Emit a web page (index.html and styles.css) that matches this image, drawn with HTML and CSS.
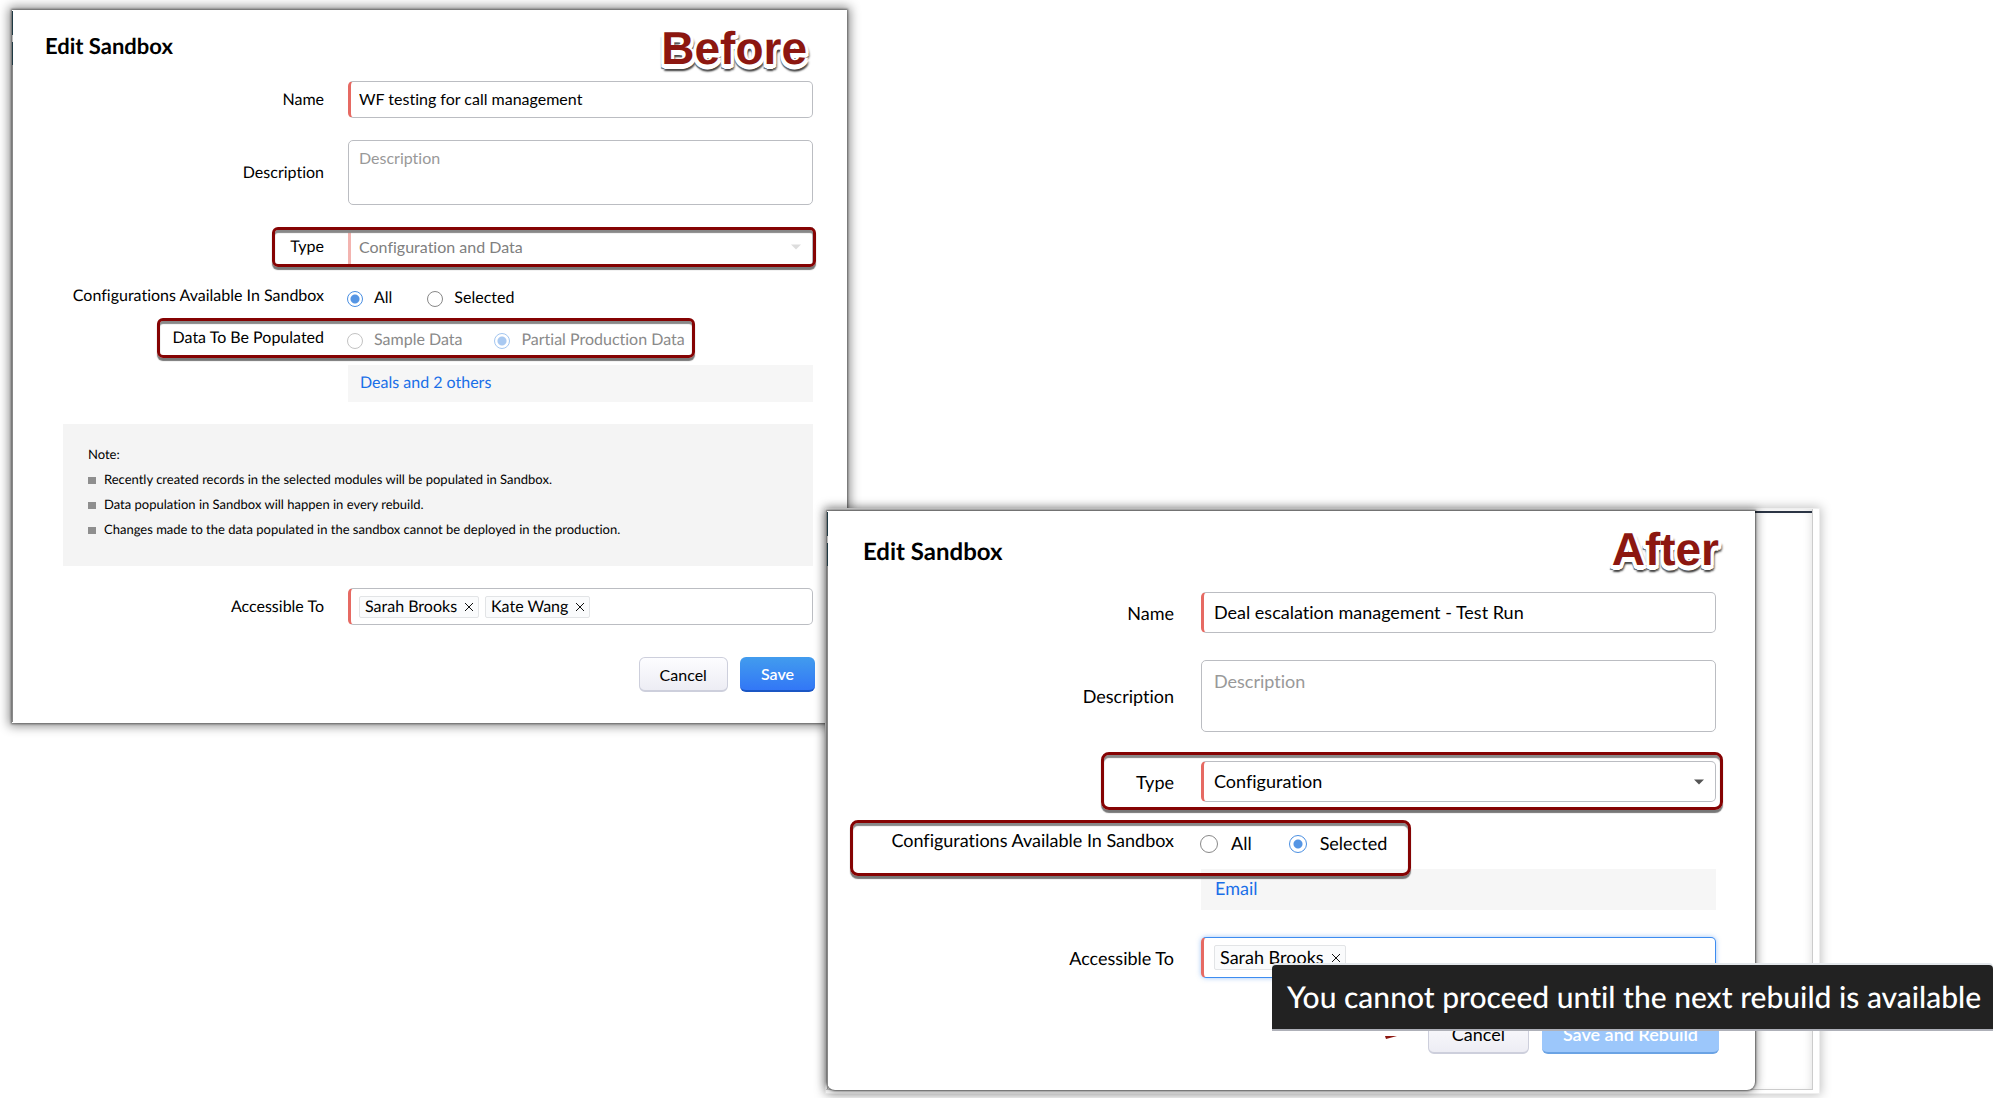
FILE: index.html
```
<!DOCTYPE html>
<html lang="en">
<head>
  <meta charset="UTF-8">
  <meta name="viewport" content="width=device-width, initial-scale=1.0">
  <title>Edit Sandbox - Before and After</title>
  <link rel="stylesheet" href="styles.css">
</head>
<body>
  <main class="canvas">

    <!-- Before -->
    <form class="window before">
      <h2 class="title">Edit Sandbox</h2>
      <span class="stamp">Before</span>

      <div class="row">
        <label class="label" for="bName">Name</label>
        <input class="field required" type="text" id="bName" value="WF testing for call management">
      </div>

      <div class="row">
        <label class="label" for="bDesc">Description</label>
        <textarea class="field" id="bDesc" placeholder="Description"></textarea>
      </div>

      <div class="row type-row">
        <label class="label" for="bType">Type</label>
        <div class="select-wrap">
          <select class="field required" id="bType" disabled>
            <option>Configuration and Data</option>
          </select>
          <svg class="caret" viewBox="0 0 10 6" width="10" height="6"><path d="M0 0.500h10L5 5.500z"/></svg>
        </div>
        <span class="mark"></span>
      </div>

      <div class="row radio-row" role="radiogroup" aria-labelledby="bConfig">
        <span class="label" id="bConfig">Configurations Available In Sandbox</span>
        <div class="radios">
          <label><input type="radio" name="bConfig" checked>All</label>
          <label><input type="radio" name="bConfig">Selected</label>
        </div>
      </div>

      <div class="row radio-row data-row" role="radiogroup" aria-labelledby="bData">
        <span class="label" id="bData">Data To Be Populated</span>
        <div class="radios disabled">
          <label><input type="radio" name="bData" disabled>Sample Data</label>
          <label><input type="radio" name="bData" checked disabled>Partial Production Data</label>
        </div>
        <span class="mark"></span>
      </div>

      <div class="row link-row">
        <div class="link-box"><a href="#">Deals and 2 others</a></div>
      </div>

      <div class="note">
        <p>Note:</p>
        <ul>
          <li>Recently created records in the selected modules will be populated in Sandbox.</li>
          <li>Data population in Sandbox will happen in every rebuild.</li>
          <li>Changes made to the data populated in the sandbox cannot be deployed in the production.</li>
        </ul>
      </div>

      <div class="row">
        <label class="label" for="bAccess">Accessible To</label>
        <div class="field required tags">
          <span class="tag">Sarah Brooks
            <button type="button" aria-label="Remove Sarah Brooks"><svg viewBox="0 0 10 10" width="10" height="10"><path d="M1 1l8 8M9 1l-8 8"/></svg></button>
          </span>
          <span class="tag">Kate Wang
            <button type="button" aria-label="Remove Kate Wang"><svg viewBox="0 0 10 10" width="10" height="10"><path d="M1 1l8 8M9 1l-8 8"/></svg></button>
          </span>
          <input type="text" id="bAccess">
        </div>
      </div>

      <div class="actions">
        <button type="button" class="btn">Cancel</button>
        <button type="button" class="btn primary">Save</button>
      </div>
    </form>

    <!-- After -->
    <div class="frame">
      <form class="window after">
        <h2 class="title">Edit Sandbox</h2>
        <span class="stamp">After</span>

        <div class="row">
          <label class="label" for="aName">Name</label>
          <input class="field required" type="text" id="aName" value="Deal escalation management - Test Run">
        </div>

        <div class="row">
          <label class="label" for="aDesc">Description</label>
          <textarea class="field" id="aDesc" placeholder="Description"></textarea>
        </div>

        <div class="row type-row">
          <label class="label" for="aType">Type</label>
          <div class="select-wrap">
            <select class="field required" id="aType">
              <option>Configuration</option>
            </select>
            <svg class="caret" viewBox="0 0 10 6" width="10" height="6"><path d="M0 0.500h10L5 5.500z"/></svg>
          </div>
          <span class="mark"></span>
        </div>

        <div class="row radio-row config-row" role="radiogroup" aria-labelledby="aConfig">
          <span class="label" id="aConfig">Configurations Available In Sandbox</span>
          <div class="radios">
            <label><input type="radio" name="aConfig">All</label>
            <label><input type="radio" name="aConfig" checked>Selected</label>
          </div>
          <span class="mark"></span>
        </div>

        <div class="row link-row">
          <div class="link-box"><a href="#">Email</a></div>
        </div>

        <div class="row">
          <label class="label" for="aAccess">Accessible To</label>
          <div class="field required tags focused">
            <span class="tag">Sarah Brooks
              <button type="button" aria-label="Remove Sarah Brooks"><svg viewBox="0 0 10 10" width="10" height="10"><path d="M1 1l8 8M9 1l-8 8"/></svg></button>
            </span>
            <input type="text" id="aAccess">
          </div>
        </div>

        <div class="actions">
          <svg class="arrow-tip" viewBox="0 0 16 8" width="16" height="8"><path d="M1 8L0 5h12z"/></svg>
          <button type="button" class="btn">Cancel</button>
          <button type="button" class="btn primary" disabled>Save and Rebuild</button>
        </div>
      </form>
    </div>

    <div class="tooltip" role="tooltip">You cannot proceed until the next rebuild is available</div>
  </main>
</body>
</html>
```

FILE: styles.css
```
* {
  box-sizing: border-box;
}
body {
  margin: 0;
  background: #fff;
  color: #000;
  font-family: Lato, "Liberation Sans", sans-serif;
  font-variant-ligatures: none;
  text-rendering: geometricPrecision;
}
.canvas {
  position: relative;
  min-height: 100vh;
  overflow: hidden;
}

/* windows */
.window {
  background: #fff;
  font-size: 16px;
}
.window::before {
  content: "";
  position: absolute;
  top: 1px;
  bottom: 1px;
  left: 0;
  width: 1px;
  background: linear-gradient(#1f3a44 24px, #bbb 24px, #bbb 31px, #1f3a44 31px, #1f3a44 54px, #888 54px);
}
.before {
  position: absolute;
  top: 10px;
  left: 0.6%;
  width: 41.75%;
  padding: 21px 34px 31px 33px;
  box-shadow: 0 0 2px 1px rgba(0, 0, 0, 0.45), 0 0 10px 3px rgba(0, 0, 0, 0.45);
}
.frame {
  position: absolute;
  top: 508px;
  left: 41.25%;
  width: 49.75%;
  padding: 2px 64px 3px 1px;
  background: #fff;
  border: 1px solid #eee;
  box-shadow: inset -7px -4px 0 -1px #fff, inset -8px -5px 0 -1px #ccc, inset -8px 0 8px rgba(0, 0, 0, 0.12), 0 0 10px 1px rgba(0, 0, 0, 0.25);
}
.frame::before {
  content: "";
  position: absolute;
  top: 2px;
  right: 7px;
  width: 57px;
  height: 2px;
  background: #2b3444;
}
.after {
  position: relative;
  padding: 26px 39px 36px 36px;
  font-size: 18px;
  border-radius: 0 0 8px 8px;
  box-shadow: 0 0 2px 1px rgba(0, 0, 0, 0.5), 0 0 10px 2px rgba(0, 0, 0, 0.4);
}
.title {
  margin: 0 0 20px;
  font-size: 22px;
  line-height: 30px;
}
.after .title {
  margin-bottom: 25px;
  font-size: 24px;
}
.stamp {
  position: absolute;
  top: 12px;
  right: 40px;
  font: bold 46px/52px "Liberation Sans", Arial, sans-serif;
  color: #8c1710;
  text-shadow: -3px 0 #fff, 3px 0 #fff, 0 3px #fff, 3px 3px #fff, -3px 3px #fff, 2px 4px #fff, -2px 4px #fff, 0 5px #fff, -3px 5px 1px #666, 0 7px 2px #444, 3px 6px 2px #555, 4px 4px 2px #888;
}
.after .stamp {
  top: 12px;
  right: 36px;
}

/* form rows */
.row {
  position: relative;
  display: grid;
  grid-template-columns: 279px 1fr;
  column-gap: 24px;
  align-items: center;
  margin-bottom: 22px;
}
.after .row {
  grid-template-columns: 311px 1fr;
  column-gap: 27px;
  margin-bottom: 27px;
}
.label {
  text-align: right;
  line-height: 20px;
}
.field {
  display: block;
  width: 100%;
  height: 37px;
  margin: 0;
  padding: 0 10px 2px;
  border: 1px solid #bbbdc2;
  border-radius: 5px;
  background: #fff;
  color: #000;
  font: inherit;
  outline: none;
}
.after .field {
  height: 41px;
  padding: 0 12px 2px;
}
textarea.field {
  height: 65px;
  padding-top: 7px;
  line-height: 20px;
  resize: none;
}
.after textarea.field {
  height: 72px;
  padding-top: 10px;
}
.field::placeholder {
  color: #999;
}
.field.required {
  border-left: 3px solid #e66a63;
  padding-left: 8px;
}
.after .field.required {
  padding-left: 10px;
}
select.field {
  appearance: none;
}
.select-wrap {
  position: relative;
}
.caret {
  position: absolute;
  top: 50%;
  right: 12px;
  margin-top: -3px;
  fill: #555;
}
.before .caret {
  fill: #ddd;
}
.before select.field {
  height: 40px;
  border-radius: 0;
  border-left-color: #f3b4b0;
  color: #808080;
  opacity: 1;
}
.after .type-row {
  margin: -7px 0 10px;
  padding: 9px 0 8px;
}

/* red annotation boxes */
.mark {
  position: absolute;
  top: 0;
  bottom: 0;
  left: 227px;
  right: -3px;
  border: 3px solid #850303;
  border-radius: 6px;
  box-shadow: 0 3px 1px #777, inset 0 3px 1px #888;
  pointer-events: none;
}
.data-row .mark {
  left: 112px;
  right: 118px;
}
.after .mark {
  left: 238px;
  right: -7px;
  border-radius: 8px;
}
.after .config-row .mark {
  left: -13px;
  right: 305px;
  bottom: -7px;
}

/* radios */
.type-row {
  margin-bottom: 19px;
}
.radio-row {
  align-items: start;
  margin-bottom: 10px;
}
.radios {
  display: flex;
  gap: 36px;
  padding-top: 2px;
  line-height: 20px;
}
.radios label {
  display: flex;
  align-items: center;
  gap: 11px;
}
.radios input {
  appearance: none;
  width: 16px;
  height: 16px;
  margin: 1px 0 0 -1px;
  border: 1px solid #888;
  border-radius: 50%;
  background: #fff;
}
.radios input:checked {
  border-color: #4a8fe2;
  background: radial-gradient(circle, #5595e4 4px, #fff 5px);
}
.radios.disabled {
  gap: 33px;
  color: #8a8a8a;
}
.radios.disabled input {
  opacity: 0.5;
}
.data-row {
  height: 40px;
  padding-top: 10px;
  margin-bottom: 7px;
}
.after .config-row {
  height: 49px;
  margin-bottom: 0;
  padding-top: 10px;
  z-index: 1;
}
.after .radios {
  gap: 38px;
  padding-top: 3px;
}
.after .radios label {
  gap: 13px;
}
.after .radios input {
  width: 18px;
  height: 18px;
}
.link-box {
  grid-column: 2;
  padding: 0 12px 2px;
  background: #f6f6f6;
  line-height: 35px;
}
.after .link-box {
  padding: 0 14px 2px;
  line-height: 39px;
}
.link-box a {
  color: #1a6fe8;
  text-decoration: none;
}

.note {
  margin: 0 0 22px 18px;
  padding: 19px 25px 24px;
  background: #f4f4f4;
  font-size: 13px;
}
.note p {
  margin: 0 0 2px;
  line-height: 22px;
}
.note ul {
  margin: 0;
  padding: 0;
  list-style: none;
}
.note li {
  display: flex;
  align-items: center;
  gap: 8px;
  line-height: 25px;
}
.note li::before {
  content: "";
  width: 8px;
  height: 7px;
  margin-top: 2px;
  background: #8e8e8e;
}

/* tags */
.field.tags {
  display: flex;
  align-items: center;
  gap: 6px;
  padding-bottom: 0;
}
.tags > input {
  flex: 1;
  min-width: 0;
  border: 0;
  background: none;
  font: inherit;
  outline: none;
}
.tag {
  display: flex;
  align-items: center;
  gap: 7px;
  padding: 0 4px 0 5px;
  border: 1px solid #e2e4e6;
  border-radius: 2px;
  background: #fafbfc;
  line-height: 20px;
}
.after .tag {
  line-height: 23px;
}
.tag button {
  display: flex;
  padding: 0;
  border: 0;
  background: none;
}
.tag svg {
  fill: none;
  stroke: #111;
}
.after .tags.focused {
  border-color: #3d8cf0;
  border-left-color: #e66a63;
  box-shadow: 0 0 5px rgba(61, 140, 240, 0.5);
}

/* buttons */
.actions {
  position: relative;
  display: flex;
  justify-content: flex-end;
  gap: 12px;
  margin: 32px -2px 0 0;
}
.after .actions {
  gap: 13px;
  margin: 37px -3px 0 0;
}
.btn {
  height: 35px;
  padding: 0 20px;
  border: 1px solid #cdcfdc;
  border-bottom-width: 2px;
  border-radius: 6px;
  background: linear-gradient(#fdfdff, #ededf4);
  color: #000;
  font: inherit;
}
.btn.primary {
  padding: 0 21px;
  border: 0;
  border-bottom: 2px solid #1a56c4;
  background: linear-gradient(#429cee, #3277f6);
  color: #fff;
  font-weight: 600;
}
.after .btn {
  height: 39px;
  padding: 0 23px;
}
.after .btn.primary {
  padding: 0 21px;
  border-bottom-color: #6ba3e4;
  background: #9cc7fb;
}
.arrow-tip {
  position: absolute;
  right: 318px;
  top: 16px;
  fill: #8c1710;
}

.tooltip {
  position: absolute;
  top: 965px;
  left: 63.6%;
  padding: 0 12px 0 15px;
  border-bottom: 2px solid #aeb0b8;
  border-radius: 4px 4px 0 0;
  background: #222;
  box-shadow: 0 -2px 0 #e4e8ec;
  color: #fff;
  font-size: 30px;
  font-weight: 500;
  line-height: 64px;
  white-space: nowrap;
}
```
